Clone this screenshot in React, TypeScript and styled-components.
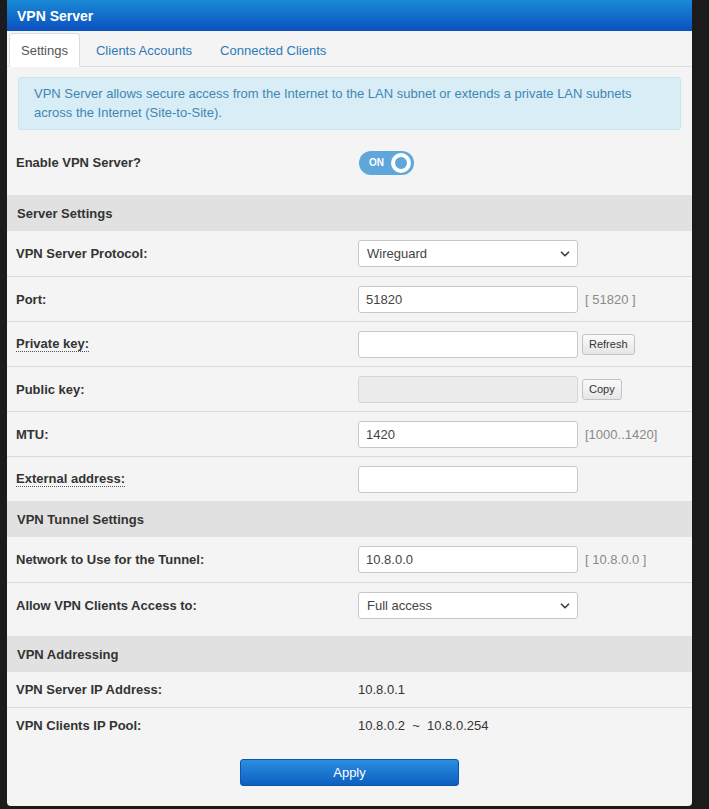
import { ChevronDown } from "lucide-react";
import styled, { createGlobalStyle } from "styled-components";

const GlobalStyle = createGlobalStyle`
	html, body {
		margin: 0;
		padding: 0;
		background: #1b1b1b;
	}
	body {
		font-family: "Liberation Sans", Arial, sans-serif;
		font-size: 13px;
		color: #333;
	}
`;

type Field = {
	label: string;
	dotted?: boolean;
	kind: "input" | "select" | "text";
	value?: string;
	hint?: string;
	button?: string;
	disabled?: boolean;
	tall?: boolean;
};

const serverFields: Field[] = [
	{ label: "VPN Server Protocol:", kind: "select", value: "Wireguard" },
	{ label: "Port:", kind: "input", value: "51820", hint: "[ 51820 ]" },
	{ label: "Private key:", dotted: true, kind: "input", value: "", button: "Refresh" },
	{ label: "Public key:", kind: "input", value: "", button: "Copy", disabled: true },
	{ label: "MTU:", kind: "input", value: "1420", hint: "[1000..1420]" },
	{ label: "External address:", dotted: true, kind: "input", value: "" },
];

const tunnelFields: Field[] = [
	{ label: "Network to Use for the Tunnel:", kind: "input", value: "10.8.0.0", hint: "[ 10.8.0.0 ]" },
	{ label: "Allow VPN Clients Access to:", kind: "select", value: "Full access", tall: true },
];

const addressFields: Field[] = [
	{ label: "VPN Server IP Address:", kind: "text", value: "10.8.0.1" },
	{ label: "VPN Clients IP Pool:", kind: "text", value: "10.8.0.2  ~  10.8.0.254" },
];

function FieldRow({ field }: { field: Field }) {
	return (
		<Row $compact={field.kind === "text"} $tall={field.tall}>
			<Label $dotted={field.dotted}>{field.label}</Label>
			<Control>
				{field.kind === "input" && (
					<TextInput defaultValue={field.value} disabled={field.disabled} />
				)}
				{field.kind === "select" && (
					<SelectWrap>
						<Select defaultValue={field.value}>
							<option>{field.value}</option>
						</Select>
						<SelectArrow>
							<ChevronDown size={14} strokeWidth={3} />
						</SelectArrow>
					</SelectWrap>
				)}
				{field.kind === "text" && <Value>{field.value}</Value>}
				{field.hint && <Hint>{field.hint}</Hint>}
				{field.button && <SmallButton>{field.button}</SmallButton>}
			</Control>
		</Row>
	);
}

export default function App() {
	return (
		<>
			<GlobalStyle />
			<Panel>
				<Header>VPN Server</Header>
				<Tabs>
					<Tab $active>Settings</Tab>
					<Tab>Clients Accounts</Tab>
					<Tab>Connected Clients</Tab>
				</Tabs>

				<Alert>
					VPN Server allows secure access from the Internet to the LAN subnet or extends a
					private LAN subnets across the Internet (Site-to-Site).
				</Alert>

				<EnableRow>
					<Label>Enable VPN Server?</Label>
					<Control>
						<Toggle>
							ON
							<Knob />
						</Toggle>
					</Control>
				</EnableRow>

				<SectionTitle>Server Settings</SectionTitle>
				{serverFields.map((f) => (
					<FieldRow key={f.label} field={f} />
				))}

				<SectionTitle>VPN Tunnel Settings</SectionTitle>
				{tunnelFields.map((f) => (
					<FieldRow key={f.label} field={f} />
				))}

				<SectionTitle>VPN Addressing</SectionTitle>
				{addressFields.map((f) => (
					<FieldRow key={f.label} field={f} />
				))}

				<Footer>
					<ApplyButton>Apply</ApplyButton>
				</Footer>
			</Panel>
		</>
	);
}

const Panel = styled.main`
	width: 685px;
	margin-left: 7px;
	background: #f4f4f4;
	border-radius: 0 0 4px 4px;
	overflow: hidden;
`;

const Header = styled.header`
	height: 31px;
	display: flex;
	align-items: center;
	padding-left: 10px;
	background: linear-gradient(to bottom, #1a8ad6 0%, #1168c8 60%, #0b4fbd 100%);
	color: #fff;
	font-weight: bold;
	font-size: 14px;
`;

const Tabs = styled.nav`
	display: flex;
	align-items: flex-end;
	gap: 4px;
	height: 35px;
	padding-left: 2px;
	border-bottom: 1px solid #dcdcdc;
`;

const Tab = styled.div<{ $active?: boolean }>`
	height: 34px;
	box-sizing: border-box;
	display: flex;
	align-items: center;
	padding: 0 11px;
	margin-bottom: -1px;
	font-size: 13px;
	color: ${(p) => (p.$active ? "#555" : "#2d7ab8")};
	background: ${(p) => (p.$active ? "#fff" : "transparent")};
	border: 1px solid ${(p) => (p.$active ? "#dcdcdc" : "transparent")};
	border-bottom-color: ${(p) => (p.$active ? "#fff" : "transparent")};
	border-radius: 4px 4px 0 0;
`;

const Alert = styled.div`
	margin: 10px 11px 0;
	padding: 6px 15px 7px;
	background: #d9edf7;
	border: 1px solid #c9e4f1;
	border-radius: 3px;
	color: #3f87b0;
	font-size: 13px;
	line-height: 19px;
`;

const EnableRow = styled.div`
	display: grid;
	grid-template-columns: 342px 1fr;
	align-items: center;
	height: 65px;
	padding-left: 9px;
`;

const SectionTitle = styled.div`
	height: 36px;
	display: flex;
	align-items: center;
	padding-left: 10px;
	background: #e1e1e1;
	font-weight: bold;
	font-size: 13px;
	color: #333;
`;

const Row = styled.div<{ $compact?: boolean; $tall?: boolean }>`
	display: grid;
	grid-template-columns: 342px 1fr;
	align-items: center;
	box-sizing: border-box;
	height: ${(p) => (p.$compact ? "35px" : p.$tall ? "54px" : "45px")};
	padding-left: 9px;
	padding-bottom: ${(p) => (p.$tall ? "9px" : "0")};
	border-top: 1px solid #dadada;

	${SectionTitle} + & {
		border-top: none;
	}
`;

const Label = styled.span<{ $dotted?: boolean }>`
	justify-self: start;
	font-weight: bold;
	font-size: 13px;
	color: #333;
	border-bottom: ${(p) => (p.$dotted ? "1px dotted #555" : "none")};
	line-height: 15px;
`;

const Control = styled.div`
	display: flex;
	align-items: center;
`;

const TextInput = styled.input`
	width: 220px;
	height: 27px;
	box-sizing: border-box;
	padding: 0 7px;
	border: 1px solid #c8c8c8;
	border-radius: 3px;
	background: #fff;
	font-family: inherit;
	font-size: 13px;
	color: #444;
	outline: none;

	&:disabled {
		background: #ececec;
		border-color: #d6d6d6;
	}
`;

const SelectWrap = styled.div`
	position: relative;
	width: 220px;
`;

const Select = styled.select`
	appearance: none;
	width: 220px;
	height: 27px;
	box-sizing: border-box;
	padding: 0 8px;
	border: 1px solid #c8c8c8;
	border-radius: 3px;
	background: #fff;
	font-family: inherit;
	font-size: 13px;
	color: #444;
`;

const SelectArrow = styled.span`
	position: absolute;
	right: 6px;
	top: 7px;
	color: #444;
	pointer-events: none;
	display: flex;
`;

const Hint = styled.span`
	margin-left: 7px;
	color: #8a8a8a;
	font-size: 13px;
`;

const SmallButton = styled.button`
	margin-left: 4px;
	height: 21px;
	padding: 0 6px;
	border: 1px solid #c2c2c2;
	border-radius: 3px;
	background: linear-gradient(to bottom, #fafafa, #e6e6e6);
	font-family: inherit;
	font-size: 11px;
	color: #333;
`;

const Value = styled.span`
	font-size: 13px;
	color: #333;
	white-space: pre;
`;

const Toggle = styled.div`
	width: 55px;
	height: 24px;
	box-sizing: border-box;
	margin-left: 1px;
	display: flex;
	align-items: center;
	justify-content: space-between;
	padding: 0 3px 0 10px;
	background: #5fa6db;
	border-radius: 12px;
	color: #fff;
	font-size: 10px;
	font-weight: bold;
`;

const Knob = styled.span`
	width: 12px;
	height: 12px;
	border: 4px solid #fff;
	border-radius: 50%;
	background: #5fa6db;
`;

const Footer = styled.div`
	display: flex;
	justify-content: center;
	padding: 17px 0 20px;
`;

const ApplyButton = styled.button`
	width: 219px;
	height: 27px;
	border: 1px solid #0c55a8;
	border-radius: 3px;
	background: linear-gradient(to bottom, #2a8ee0, #0d5fc0);
	color: #fff;
	font-family: inherit;
	font-size: 13px;
`;
